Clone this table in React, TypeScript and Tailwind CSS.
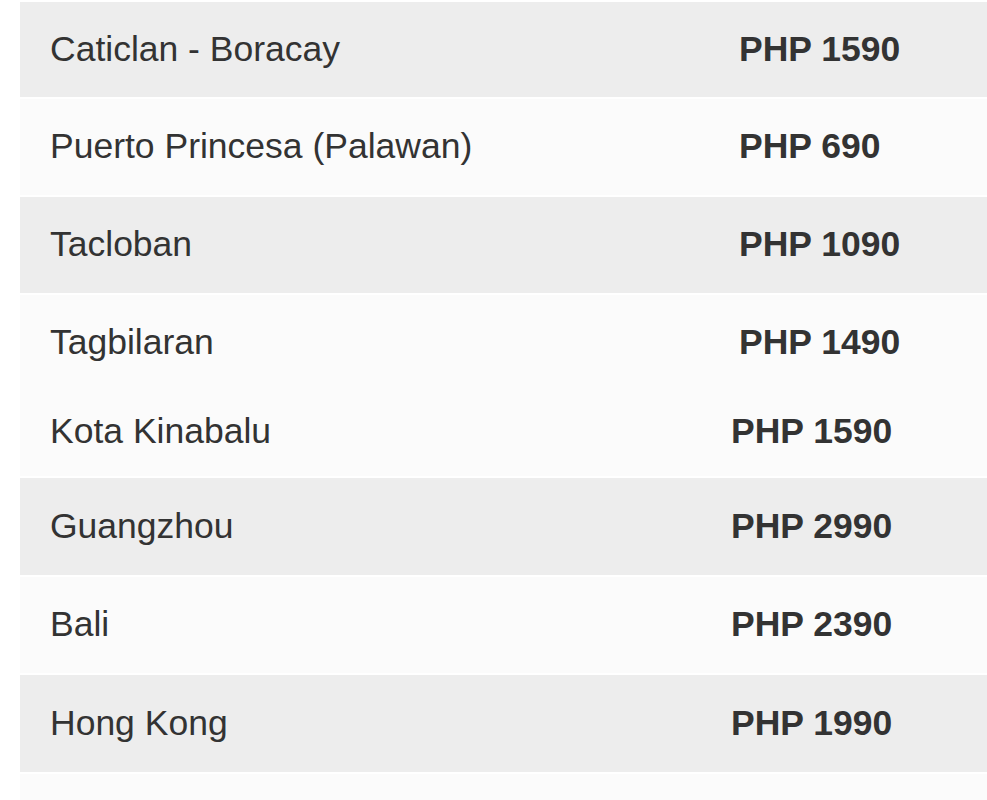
const topRoutes = [
  { name: 'Caticlan - Boracay', price: 'PHP 1590', h: 'h-[95px]' },
  { name: 'Puerto Princesa (Palawan)', price: 'PHP 690', h: 'h-[96px]' },
  { name: 'Tacloban', price: 'PHP 1090', h: 'h-[96px]' },
  { name: 'Tagbilaran', price: 'PHP 1490', h: 'h-[96px]' },
];

const bottomRoutes = [
  { name: 'Kota Kinabalu', price: 'PHP 1590', h: 'h-[83px] pb-[5px]' },
  { name: 'Guangzhou', price: 'PHP 2990', h: 'h-[97px]' },
  { name: 'Bali', price: 'PHP 2390', h: 'h-[96px]' },
  { name: 'Hong Kong', price: 'PHP 1990', h: 'h-[97px]' },
];

function FareTable({
  rows,
  firstCol,
  startGray,
}: {
  rows: { name: string; price: string; h: string }[];
  firstCol: string;
  startGray: boolean;
}) {
  return (
    <div className="flex flex-col gap-[2px]">
      {rows.map((r, i) => {
        const gray = startGray ? i % 2 === 0 : i % 2 === 1;
        return (
          <div
            key={r.name}
            className={`flex items-center ${r.h} ${gray ? 'bg-[#ededed]' : 'bg-[#fbfbfb]'}`}
          >
            <div className={`${firstCol} pl-[30px] shrink-0`}>{r.name}</div>
            <div className="font-bold">{r.price}</div>
          </div>
        );
      })}
    </div>
  );
}

export default function App() {
  return (
    <div
      className="bg-white w-[987px] h-[800px] overflow-hidden pl-[20px] pt-[2px] text-[35.5px] leading-none text-[#333333]"
      style={{ fontFamily: '"Liberation Sans", Arial, sans-serif' }}
    >
      <FareTable rows={topRoutes} firstCol="w-[719px]" startGray />
      <div className="h-[2px] bg-[#fbfbfb]" />
      <FareTable rows={bottomRoutes} firstCol="w-[711px]" startGray={false} />
      <div className="h-[2px]" />
      <div className="h-[40px] bg-[#fbfbfb]" />
    </div>
  );
}
